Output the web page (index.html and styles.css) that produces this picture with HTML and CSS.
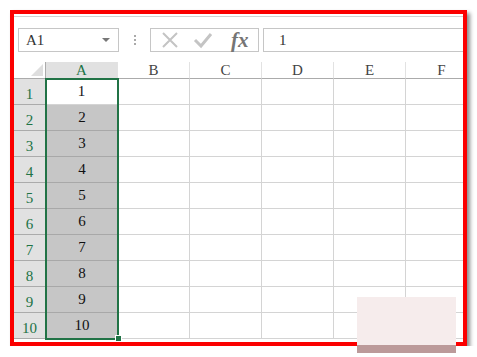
FILE: index.html
```html
<!DOCTYPE html>
<html lang="zh">
<head>
    <meta charset="UTF-8">
    <title>Excel - A1:A10</title>
    <link rel="stylesheet" href="styles.css">
</head>
<body>
    <div class="frame">
        <div class="topline"></div>

        <!-- Formula bar -->
        <div class="formula-bar">
            <div class="name-box">
                <span>A1</span>
                <span class="caret"></span>
            </div>
            <div class="grip"><i></i><i></i><i></i></div>
            <div class="fx-box">
                <svg width="18" height="18" viewBox="0 0 18 18"><path d="M2 2 L16 16 M16 2 L2 16" stroke="#c4c4c4" stroke-width="2" fill="none"/></svg>
                <svg width="20" height="18" viewBox="0 0 20 18"><path d="M2 9 L8 15 L18 3" stroke="#c4c4c4" stroke-width="3" fill="none"/></svg>
                <span class="fx">fx</span>
            </div>
            <div class="formula-input">1</div>
        </div>

        <!-- Sheet -->
        <div class="sheet">
            <div class="grid" id="grid"></div>
            <div class="selection"></div>
            <div class="handle"></div>
        </div>
    </div>

    <div class="watermark"></div>

    <script>
        const cols = ["A", "B", "C", "D", "E", "F"];
        const grid = document.getElementById("grid");

        function cell(cls, text) {
            const div = document.createElement("div");
            div.className = cls;
            if (text !== undefined) div.textContent = text;
            grid.appendChild(div);
        }

        // Header row
        cell("corner");
        cols.forEach(c => cell(c === "A" ? "col-head active" : "col-head", c));

        // Data rows
        for (let r = 1; r <= 10; r++) {
            cell("row-head", r);
            cols.forEach(c => {
                if (c === "A") {
                    cell(r === 1 ? "cell first" : "cell picked", r);
                } else {
                    cell("cell");
                }
            });
        }
    </script>
</body>
</html>
```

FILE: styles.css
```css
body {
    margin: 0;
    background-color: #fff;
    font-family: 'Liberation Serif', 'DejaVu Serif', serif;
}
.frame {
    position: relative;
    margin: 10px 0 0 10px;
    width: 449px;
    height: 328px;
    border: 4px solid #fb0000;
    box-shadow: 3px 3px 4px rgba(0, 0, 0, 0.45);
    overflow: hidden;
    background-color: #fff;
}
.topline {
    height: 1px;
    margin-top: 2px;
    background-color: #d2d2d2;
}
.formula-bar {
    display: flex;
    align-items: center;
    height: 24px;
    margin: 11px 0 10px 4px;
}
.name-box {
    box-sizing: border-box;
    width: 101px;
    height: 24px;
    border: 1px solid #c6c6c6;
    display: flex;
    align-items: center;
    justify-content: space-between;
    padding: 0 8px 0 7px;
    font-size: 15px;
    color: #333;
}
.caret {
    width: 0;
    height: 0;
    border-left: 4px solid transparent;
    border-right: 4px solid transparent;
    border-top: 4px solid #777;
}
.grip {
    width: 31px;
    display: flex;
    flex-direction: column;
    align-items: center;
    gap: 2px;
}
.grip i {
    width: 2px;
    height: 2px;
    background-color: #aaa;
}
.fx-box {
    box-sizing: border-box;
    width: 109px;
    height: 24px;
    border: 1px solid #c6c6c6;
    display: flex;
    align-items: center;
    gap: 14px;
    padding-left: 10px;
}
.fx {
    font-family: 'Liberation Serif', serif;
    font-style: italic;
    font-weight: bold;
    font-size: 21px;
    color: #757575;
    margin-left: 4px;
}
.formula-input {
    flex: 1;
    box-sizing: border-box;
    height: 24px;
    margin-left: 4px;
    border: 1px solid #c6c6c6;
    border-right: none;
    padding-left: 15px;
    display: flex;
    align-items: center;
    font-size: 15px;
    color: #333;
}
.sheet {
    position: relative;
}
.grid {
    display: grid;
    grid-template-columns: 32px repeat(6, 72px);
    grid-template-rows: 17px repeat(10, 26px);
    font-size: 15px;
}
.grid div {
    box-sizing: border-box;
    border-right: 1px solid #d4d4d4;
    border-bottom: 1px solid #d4d4d4;
    display: flex;
    align-items: center;
    justify-content: center;
}
.corner {
    position: relative;
    background-color: #fff;
    border-bottom-color: #ababab !important;
    border-right-color: #ababab !important;
}
.corner::after {
    content: "";
    position: absolute;
    right: 2px;
    bottom: 2px;
    border-left: 12px solid transparent;
    border-bottom: 12px solid #dedede;
}
.col-head {
    color: #444;
    border-right-color: #e2e2e2 !important;
    border-bottom-color: #ababab !important;
    padding-top: 1px;
}
.col-head.active {
    background-color: #e1e1e1;
    color: #217346;
}
.row-head {
    background-color: #e1e1e1;
    color: #217346;
    border-right-color: #ababab !important;
    border-bottom-color: #ababab !important;
    align-items: flex-end !important;
    padding-bottom: 1px;
}
.cell {
    color: #111;
}
.cell.first {
    background-color: #fff;
}
.cell.picked {
    background-color: #c6c6c6;
    border-bottom-color: #a8a8a8 !important;
    border-left: 1px solid #fff;
}
.selection {
    position: absolute;
    left: 31px;
    top: 16px;
    width: 74px;
    height: 262px;
    box-sizing: border-box;
    border: 2px solid #217346;
}
.handle {
    position: absolute;
    left: 101px;
    top: 273px;
    width: 5px;
    height: 5px;
    background-color: #217346;
    border: 1px solid #fff;
}
.watermark {
    position: absolute;
    left: 357px;
    top: 297px;
    width: 99px;
    height: 48px;
    background-color: #f6ecec;
    border-bottom: 8px solid #bc9a9a;
}
```
